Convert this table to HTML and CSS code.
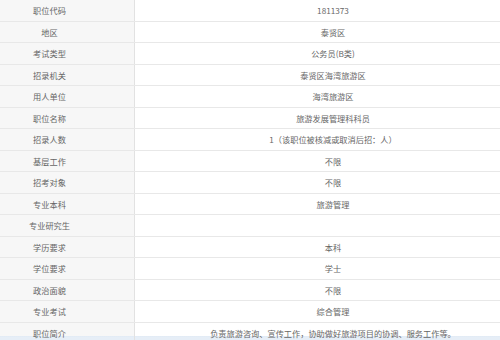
FILE: index.html
```html
<!DOCTYPE html>
<html lang="zh-CN">
<head>
<meta charset="utf-8">
<title>职位信息</title>
<link rel="stylesheet" href="styles.css">
</head>
<body>
<div class="frame">
  <div class="table">
    <div class="row"><div class="key">职位代码</div><div class="val">1811373</div></div>
    <div class="row"><div class="key">地区</div><div class="val">泰贤区</div></div>
    <div class="row"><div class="key">考试类型</div><div class="val">公务员(B类)</div></div>
    <div class="row"><div class="key">招录机关</div><div class="val">泰贤区海湾旅游区</div></div>
    <div class="row"><div class="key">用人单位</div><div class="val">海湾旅游区</div></div>
    <div class="row"><div class="key">职位名称</div><div class="val">旅游发展管理科科员</div></div>
    <div class="row"><div class="key">招录人数</div><div class="val">1（该职位被核减或取消后招：人）</div></div>
    <div class="row"><div class="key">基层工作</div><div class="val">不限</div></div>
    <div class="row"><div class="key">招考对象</div><div class="val">不限</div></div>
    <div class="row"><div class="key">专业本科</div><div class="val">旅游管理</div></div>
    <div class="row"><div class="key">专业研究生</div><div class="val"></div></div>
    <div class="row"><div class="key">学历要求</div><div class="val">本科</div></div>
    <div class="row"><div class="key">学位要求</div><div class="val">学士</div></div>
    <div class="row"><div class="key">政治面貌</div><div class="val">不限</div></div>
    <div class="row"><div class="key">专业考试</div><div class="val">综合管理</div></div>
    <div class="row last"><div class="key">职位简介</div><div class="val">负责旅游咨询、宣传工作，协助做好旅游项目的协调、服务工作等。</div></div>
  </div>
</div>
</body>
</html>
```

FILE: styles.css
```css
html, body {
  margin: 0;
  padding: 0;
  background: #ffffff;
}
body {
  width: 500px;
  height: 340px;
  overflow: hidden;
  font-family: "Noto Sans CJK SC", "Noto Sans", sans-serif;
  font-size: 8.2px;
  color: #666666;
}
.frame {
  width: 500px;
  height: 340px;
  overflow: hidden;
}
.table {
  margin-left: -35px;
  width: 566px;
  border-top: 1px solid #e8e8e8;
  margin-top: -1px;
}
.row {
  display: grid;
  grid-template-columns: 170px 396px;
  height: 21.5px;
  box-sizing: border-box;
  border-bottom: 1px solid #e8e8e8;
}
.key {
  background: #f7f7f7;
  border-right: 1px solid #e2e2e2;
  display: flex;
  align-items: center;
  justify-content: center;
  white-space: nowrap;
}
.val {
  display: flex;
  align-items: center;
  justify-content: center;
  white-space: nowrap;
}
.row.last {
  height: 22px;
}
.row.last .val {
  background: linear-gradient(to bottom, transparent 13px, #dfe9f4 13px, #e6eef7 14px);
}
.row.last .key {
  background: linear-gradient(to bottom, #f7f7f7 13px, #dfe9f4 13px, #e6eef7 14px);
}
```
